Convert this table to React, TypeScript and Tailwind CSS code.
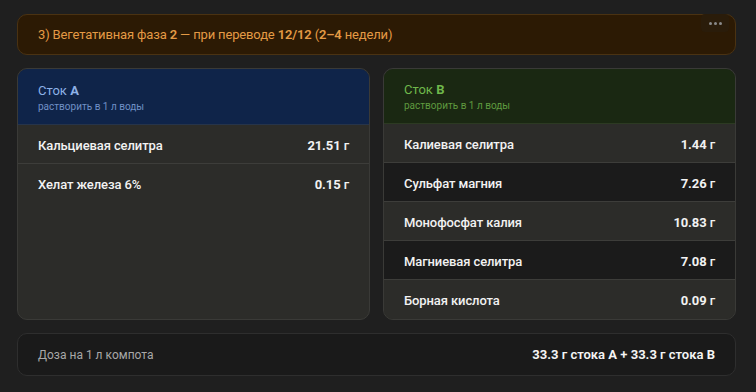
import { type ReactNode } from 'react'

interface Item {
  name: string
  grams: string
}

const stockA: Item[] = [
  { name: 'Кальциевая селитра', grams: '21.51' },
  { name: 'Хелат железа 6%', grams: '0.15' },
]

const stockB: Item[] = [
  { name: 'Калиевая селитра', grams: '1.44' },
  { name: 'Сульфат магния', grams: '7.26' },
  { name: 'Монофосфат калия', grams: '10.83' },
  { name: 'Магниевая селитра', grams: '7.08' },
  { name: 'Борная кислота', grams: '0.09' },
]

function StockCard({
  title,
  letter,
  tone,
  items,
  striped,
}: {
  title: string
  letter: string
  tone: 'blue' | 'green'
  items: Item[]
  striped?: boolean
}) {
  const isBlue = tone === 'blue'
  return (
    <div className="flex flex-col overflow-hidden rounded-[10px] border border-[#3a3a37] bg-[#2c2c29]">
      {/* Header */}
      <div
        className={
          isBlue
            ? 'flex h-[56px] flex-col justify-center border-b border-[#26344a] bg-[#0f2449] px-5 pt-[2px]'
            : 'flex h-[56px] flex-col justify-center border-b border-[#2c3a22] bg-[#1a2812] px-5 pt-[2px]'
        }
      >
        <div className={isBlue ? 'text-[13px] leading-[18px] text-[#8db1e6]' : 'text-[13px] leading-[18px] text-[#6fb84b]'}>
          {title} <span className="font-bold">{letter}</span>
        </div>
        <div className={isBlue ? 'text-[10px] leading-[14px] text-[#6f90c6]' : 'text-[10px] leading-[14px] text-[#5f9a3f]'}>
          растворить в 1 л воды
        </div>
      </div>

      {/* Rows */}
      <div className="flex flex-col">
        {items.map((item, i) => (
          <Row key={item.name} dark={striped && i % 2 === 1} last={i === items.length - 1}>
            <span>{item.name}</span>
            <span className="font-bold">
              {item.grams} <span className="font-medium">г</span>
            </span>
          </Row>
        ))}
      </div>
    </div>
  )
}

function Row({ children, dark, last }: { children: ReactNode; dark?: boolean; last?: boolean }) {
  return (
    <div
      className={
        (dark ? 'bg-[#1b1b1b] ' : 'bg-[#2c2c29] ') +
        (last ? '' : 'border-b border-[#3d3d3a] ') +
        'flex h-[39px] items-center justify-between px-5 pt-[3px] text-[13px] font-medium tracking-[-0.1px] text-[#f2f2f2]'
      }
    >
      {children}
    </div>
  )
}

export default function App() {
  return (
    <div
      className="min-h-[392px] w-[756px] bg-[#1f1f1f] pb-4 pl-[17px] pr-[20px] pt-[14px]"
      style={{ fontFamily: 'Roboto, "Noto Sans", sans-serif' }}
    >
      {/* Phase banner */}
      <div className="relative flex h-[41px] items-center rounded-[10px] border border-[#4a3212] bg-[#2c1a04] px-5 text-[13px] tracking-[-0.15px] text-[#e49a45]">
        <span>
          3) Вегетативная фаза <span className="font-semibold">2</span> — при переводе{' '}
          <span className="font-semibold">12/12</span> (<span className="font-semibold">2–4</span> недели)
        </span>
        <div className="absolute right-[6px] top-[-1px] flex h-[18px] w-[28px] items-center justify-center gap-[2px] rounded-[4px] bg-[#2a1c0a]">
          <span className="h-[3px] w-[3px] rounded-full bg-[#8a8a8a]" />
          <span className="h-[3px] w-[3px] rounded-full bg-[#8a8a8a]" />
          <span className="h-[3px] w-[3px] rounded-full bg-[#8a8a8a]" />
        </div>
      </div>

      {/* Stocks */}
      <div className="mt-[13px] grid h-[252px] grid-cols-2 gap-[13px]">
        <StockCard title="Сток" letter="A" tone="blue" items={stockA} />
        <StockCard title="Сток" letter="B" tone="green" items={stockB} striped />
      </div>

      {/* Dose summary */}
      <div className="mt-[13px] flex h-[43px] items-center justify-between rounded-[10px] border border-[#2e2e2e] bg-[#1a1a1a] px-5">
        <span className="text-[12px] text-[#a8a8a8]">Доза на 1 л компота</span>
        <span className="text-[13px] font-semibold text-[#f4f4f4]">
          <span className="font-bold">33.3</span> г стока <span className="font-bold">A</span> +{' '}
          <span className="font-bold">33.3</span> г стока <span className="font-bold">B</span>
        </span>
      </div>
    </div>
  )
}
